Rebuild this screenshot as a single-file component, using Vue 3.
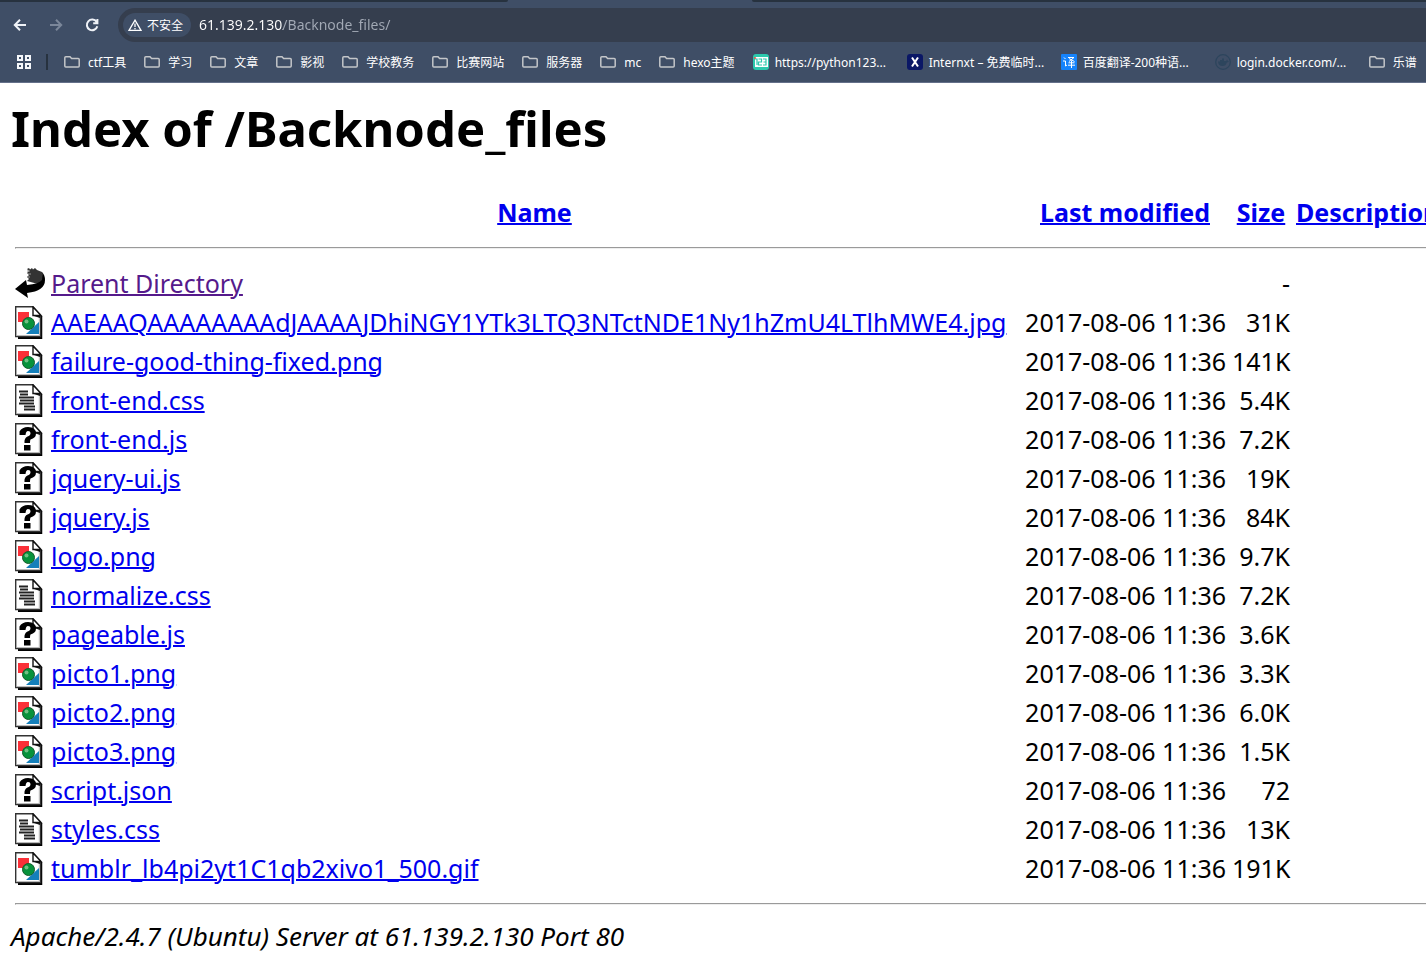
<script setup>
import { ref } from 'vue'

const url = ref('61.139.2.130/Backnode_files/')

const folders = ['ctf工具', '学习', '文章', '影视', '学校教务', '比赛网站', '服务器', 'mc', 'hexo主题']

const sites = [
  { icon: 'python', label: 'https://python123...' },
  { icon: 'internxt', label: 'Internxt – 免费临时...' },
  { icon: 'fanyi', label: '百度翻译-200种语...' },
  { icon: 'docker', label: 'login.docker.com/...' },
]

const date = '2017-08-06 11:36'
const files = [
  { icon: 'back', name: 'Parent Directory', date: '', size: '-' },
  { icon: 'image', name: 'AAEAAQAAAAAAAAdJAAAAJDhiNGY1YTk3LTQ3NTctNDE1Ny1hZmU4LTlhMWE4.jpg', date, size: '31K' },
  { icon: 'image', name: 'failure-good-thing-fixed.png', date, size: '141K' },
  { icon: 'text', name: 'front-end.css', date, size: '5.4K' },
  { icon: 'unknown', name: 'front-end.js', date, size: '7.2K' },
  { icon: 'unknown', name: 'jquery-ui.js', date, size: '19K' },
  { icon: 'unknown', name: 'jquery.js', date, size: '84K' },
  { icon: 'image', name: 'logo.png', date, size: '9.7K' },
  { icon: 'text', name: 'normalize.css', date, size: '7.2K' },
  { icon: 'unknown', name: 'pageable.js', date, size: '3.6K' },
  { icon: 'image', name: 'picto1.png', date, size: '3.3K' },
  { icon: 'image', name: 'picto2.png', date, size: '6.0K' },
  { icon: 'image', name: 'picto3.png', date, size: '1.5K' },
  { icon: 'unknown', name: 'script.json', date, size: '72' },
  { icon: 'text', name: 'styles.css', date, size: '13K' },
  { icon: 'image', name: 'tumblr_lb4pi2yt1C1qb2xivo1_500.gif', date, size: '191K' },
]
</script>

<template>
  <div class="window">
    <header class="chrome">
      <div class="tabs"><div class="tab-left"></div><div class="tab-active"></div><div class="tab-right"></div></div>
      <div class="toolbar">
        <button class="nav" aria-label="Back">
          <svg width="16" height="16" viewBox="0 0 16 16"><path d="M14 8H3M8 2.8 2.8 8 8 13.2" /></svg>
        </button>
        <button class="nav dim" aria-label="Forward">
          <svg width="16" height="16" viewBox="0 0 16 16"><path d="M2 8h11M8 2.8 13.2 8 8 13.2" /></svg>
        </button>
        <button class="nav" aria-label="Reload">
          <svg width="16" height="16" viewBox="0 0 16 16"><path d="M12.6 5A5.3 5.3 0 1 0 13.3 9.2M13.4 2v4.2H9.2" /></svg>
        </button>
        <div class="omnibox">
          <button class="security">
            <svg width="14" height="12" viewBox="0 0 14 12"><path d="M7 1.2 13 11.3H1ZM7 4.6v3.4M7 9v1.2" /></svg>
            <span>不安全</span>
          </button>
          <input v-model="url" class="url" type="text" aria-label="Address" spellcheck="false" />
        </div>
      </div>
      <nav class="bookmarks">
        <button class="apps" aria-label="Apps">
          <svg width="14" height="14" viewBox="0 0 14 14"><path d="M1 1h4v4H1zM9 1h4v4H9zM1 9h4v4H1zM9 9h4v4H9z" /></svg>
        </button>
        <span class="divider"></span>
        <button v-for="f in folders" :key="f" class="folder">
          <svg width="16" height="12" viewBox="0 0 16 12"><path d="M.8 10V1.8q0-1 1-1H6L7.6 2.6h6.6q1 0 1 1V10q0 1-1 1H1.8q-1 0-1-1Z" /></svg>
          <span>{{ f }}</span>
        </button>
        <a v-for="s in sites" :key="s.label" class="site" href="#">
          <svg v-if="s.icon === 'python'" width="16" height="16" viewBox="0 0 16 16">
            <rect width="16" height="16" rx="3" fill="#2cc9ad" />
            <rect x="2" y="3" width="13" height="10" fill="#fff" />
            <path d="M2 5h2v6M5.500 5h3v3h-3v3h3.500M10 5h3v6h-3M10.500 8H13" fill="none" stroke="#2cc9ad" stroke-width="1.2" />
            <path d="M1 4h2" stroke="#f05545" stroke-width="1.500" />
          </svg>
          <svg v-else-if="s.icon === 'internxt'" width="16" height="16" viewBox="0 0 16 16">
            <rect width="16" height="16" rx="3" fill="#0a1766" />
            <path d="m5 3.500 6 9M11 3.500l-6 9" stroke="#fff" stroke-width="2" />
          </svg>
          <svg v-else-if="s.icon === 'fanyi'" width="16" height="16" viewBox="0 0 16 16">
            <rect width="16" height="16" rx="1" fill="#1683fb" />
            <path d="M3 3.500l1.500 1.500M2 7h2.500v5l1.500-1M7 3.500h6L8 7.500M8 4.500l5.500 3M10.500 6.500V14M7.500 8.800h6M7 11.200h7" fill="none" stroke="#fff" />
          </svg>
          <svg v-else width="16" height="16" viewBox="0 0 16 16">
            <circle cx="8" cy="8" r="7.300" fill="none" stroke="#2d455d" stroke-width="1.300" />
            <path d="M3 7.500h2V6h2V4.500h2V7h2.200l.8-1.500 1 1.500 1 .3q-1 1.200-2.200 1.200Q11 12 7.500 12 3.500 12 3 7.500Z" fill="#2d455d" />
          </svg>
          <span>{{ s.label }}</span>
        </a>
        <button class="folder">
          <svg width="16" height="12" viewBox="0 0 16 12"><path d="M.8 10V1.8q0-1 1-1H6L7.6 2.6h6.6q1 0 1 1V10q0 1-1 1H1.8q-1 0-1-1Z" /></svg>
          <span>乐谱</span>
        </button>
      </nav>
    </header>

    <main class="page">
      <h1>Index of /Backnode_files</h1>
      <div class="listing">
        <table>
          <colgroup>
            <col class="c-icon" /><col /><col class="c-date" /><col class="c-size" /><col class="c-desc" />
          </colgroup>
          <thead>
            <tr>
              <td></td>
              <th scope="col"><a href="#">Name</a></th>
              <th scope="col"><a href="#">Last modified</a></th>
              <th scope="col"><a href="#">Size</a></th>
              <th scope="col"><a href="#">Description</a></th>
            </tr>
            <tr class="rule"><td colspan="5"><hr /></td></tr>
          </thead>
          <tbody>
            <tr v-for="f in files" :key="f.name">
              <td>
                <svg v-if="f.icon === 'back'" class="icon" viewBox="0 0 30 33">
                  <path d="M12 2l2-1 1 1.500 2-1.500 1 1.500L20 1l2 2 5 2 2 8-6 4-11-3 2-2-2-2 2-2-2-2 2-2Z" fill="#333" />
                  <path d="M12 4h3M13 7h3M12 10h3" stroke="#999" />
                  <path d="M27 5q3 3 3 8 0 11-18 13l1 5L0 22l11-9 1 5q12-1 15-5 1-4 0-8Z" fill="#000" />
                </svg>
                <svg v-else class="icon" viewBox="0 0 30 33">
                  <path d="M26 10v22H3" fill="none" stroke="#000" stroke-width="2.500" />
                  <path d="M.7.7H18L25.500 9v21.500H.7Z" fill="#fff" stroke="#333" stroke-width="1.400" />
                  <path d="M1.500 29.500h22.800V11" fill="none" stroke="#bbb" />
                  <path d="M18 1v8.500h8Z" fill="#fff" stroke="#111" stroke-width="1.400" />
                  <path d="M17.500 9.500H25V12Z" fill="#111" />
                  <g v-if="f.icon === 'image'">
                    <path d="M3 6h11v10H3Z" fill="#fa3038" />
                    <path d="M24 16v12H11Z" fill="#147fba" />
                    <circle cx="13.500" cy="17.500" r="6" fill="#07923b" stroke="#145b2c" />
                    <circle cx="11.500" cy="15.500" r="2" fill="#70bf83" />
                  </g>
                  <path v-else-if="f.icon === 'text'" d="M4 7.500h9M5 10.500h8M4 13.500h15M5 16.500h14M4 19.500h15M9 22.500h11M9 25.500h11" stroke="#222" stroke-width="1.800" />
                  <g v-else>
                    <path d="M4.500 12V8.500Q7 4 13 4q8 0 8 6.500 0 4.500-5.500 6-.5.500-.5 3.500H9.500q-.5-5 3-6.500 3-1 3-3.500 0-2-2.500-2-2 0-2.500 4Z" fill="#000" />
                    <path d="M9 22h6.500v5.500H9Z" fill="#000" />
                  </g>
                </svg>
              </td>
              <td><a href="#" :class="{ visited: f.icon === 'back' }">{{ f.name }}</a></td>
              <td class="num">{{ f.date }}</td>
              <td class="num">{{ f.size }}</td>
              <td></td>
            </tr>
          </tbody>
          <tfoot>
            <tr class="rule"><td colspan="5"><hr /></td></tr>
          </tfoot>
        </table>
      </div>
      <address>Apache/2.4.7 (Ubuntu) Server at 61.139.2.130 Port 80</address>
    </main>
  </div>
</template>

<style>
body {
  margin: 0;
  background: #fff;
}
</style>

<style scoped>
.window {
  overflow: hidden;
  font-family: "Noto Sans", "Noto Sans CJK SC", sans-serif;
  color: #000;
}
button {
  display: flex;
  align-items: center;
  padding: 0;
  border: 0;
  background: none;
  font: inherit;
  color: inherit;
}
svg {
  flex: none;
}
.chrome {
  background: #3f4e66;
  border-bottom: 1px solid #64708a;
  color: #fff;
  font-size: 12px;
}
.tabs {
  display: flex;
  height: 2px;
  background: #3f4e66;
}
.tab-left {
  width: 508px;
  background: #27323f;
  border-radius: 0 0 4px 0;
}
.tab-active {
  width: 244px;
}
.tab-right {
  flex: 1;
  background: #27323f;
  border-radius: 0 0 0 4px;
}
.toolbar {
  display: flex;
  align-items: center;
  gap: 20px;
  height: 46px;
  padding-left: 12px;
}
.nav svg {
  fill: none;
  stroke: #f0f3f8;
  stroke-width: 2;
}
.nav.dim svg {
  stroke: #7b879a;
}
.omnibox {
  display: flex;
  flex: 1;
  align-items: center;
  height: 34px;
  margin-left: -2px;
  padding-left: 5px;
  border-radius: 17px 0 0 17px;
  background: #353e4e;
}
.security {
  gap: 5px;
  height: 24px;
  padding: 0 8px 0 5px;
  border-radius: 12px;
  background: #3f4e66;
}
.security svg {
  fill: none;
  stroke: #fff;
  stroke-width: 1.3;
}
.url {
  flex: 1;
  height: 22px;
  margin-left: 8px;
  padding: 0 0 2px;
  border: 0;
  outline: 0;
  font-family: "Noto Sans", sans-serif;
  font-size: 14px;
  color: transparent;
  background: linear-gradient(90deg, #fff 84px, #a3aab6 84px);
  background-clip: text;
}
.bookmarks {
  display: flex;
  align-items: center;
  gap: 18px;
  height: 28px;
  padding: 0 0 6px 17px;
  white-space: nowrap;
}
.apps svg {
  fill: none;
  stroke: #f5f7fa;
  stroke-width: 2;
}
.divider {
  width: 2px;
  height: 16px;
  margin: 0 -2px 0 -3px;
  background: #27323f;
}
.folder {
  flex: none;
  gap: 8px;
}
.folder svg {
  fill: none;
  stroke: #c4c6c9;
  stroke-width: 1.5;
}
.site {
  display: flex;
  flex: none;
  align-items: center;
  gap: 6px;
  width: 136px;
  color: inherit;
  text-decoration: none;
}
.page {
  font-size: 25px;
}
h1 {
  margin: 0;
  padding: 10px 11px 0;
  font-size: 49px;
  line-height: 70px;
  font-weight: 700;
}
.listing {
  margin-top: 30px;
  padding-left: 9px;
}
table {
  width: calc(100% + 16px);
  table-layout: fixed;
  border-spacing: 6px 0;
}
.c-icon { width: 30px; }
.c-date { width: 202px; }
.c-size { width: 58px; }
.c-desc { width: 140px; }
th,
td {
  height: 39px;
  padding: 0;
  line-height: 39px;
  white-space: nowrap;
  text-align: left;
}
th {
  text-align: center;
}
.num {
  text-align: right;
}
.rule td {
  height: 32px;
}
hr {
  margin: 0;
  border: 1px solid;
  border-color: #9a9a9a #eee #eee #9a9a9a;
}
.icon {
  display: block;
  width: 30px;
  height: 33px;
}
.listing a {
  color: #00e;
  text-decoration-thickness: 2px;
}
.listing a.visited {
  color: #551a8b;
}
address {
  padding: 0 11px;
  font-size: 26px;
  line-height: 32px;
}
</style>
